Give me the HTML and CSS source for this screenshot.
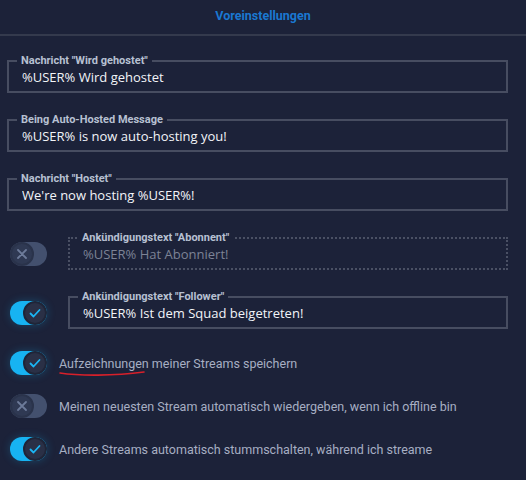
FILE: index.html
```html
<!DOCTYPE html>
<html lang="de">

<head>
    <meta charset="UTF-8">
    <meta name="viewport" content="width=device-width, initial-scale=1.0">
    <title>Voreinstellungen</title>
    <link rel="stylesheet" href="styles.css">
</head>

<body>

    <h1 class="titel">Voreinstellungen</h1>

    <div class="inhalt">

        <fieldset class="feld">
            <legend>Nachricht "Wird gehostet"</legend>
            <input class="wert" type="text" value="%USER% Wird gehostet">
        </fieldset>

        <fieldset class="feld">
            <legend>Being Auto-Hosted Message</legend>
            <input class="wert" type="text" value="%USER% is now auto-hosting you!">
        </fieldset>

        <fieldset class="feld">
            <legend>Nachricht "Hostet"</legend>
            <input class="wert" type="text" value="We're now hosting %USER%!">
        </fieldset>

        <div class="zeile">
            <span class="schalter aus">
                <span class="knopf"><svg width="20" height="20" viewBox="0 0 20 20"><path d="M6 6 L14 14 M14 6 L6 14" /></svg></span>
            </span>
            <fieldset class="feld inaktiv">
                <legend>Ankündigungstext "Abonnent"</legend>
                <input class="wert" type="text" value="%USER% Hat Abonniert!" disabled>
            </fieldset>
        </div>

        <div class="zeile">
            <span class="schalter an">
                <span class="knopf"><svg width="20" height="20" viewBox="0 0 20 20"><path d="M5.5 10.5 L8.5 13.5 L14.5 7" /></svg></span>
            </span>
            <fieldset class="feld">
                <legend>Ankündigungstext "Follower"</legend>
                <input class="wert" type="text" value="%USER% Ist dem Squad beigetreten!">
            </fieldset>
        </div>

        <div class="option">
            <span class="schalter an">
                <span class="knopf"><svg width="20" height="20" viewBox="0 0 20 20"><path d="M5.5 10.5 L8.5 13.5 L14.5 7" /></svg></span>
            </span>
            <span class="text markiert">Aufzeichnungen meiner Streams speichern
                <svg class="strich" width="90" height="8" viewBox="0 0 90 8">
                    <path d="M1 3 C 20 6, 55 6, 85 2" fill="none" stroke="#d8202a" stroke-width="1.6" stroke-linecap="round"/>
                </svg>
            </span>
        </div>

        <div class="option">
            <span class="schalter aus">
                <span class="knopf"><svg width="20" height="20" viewBox="0 0 20 20"><path d="M6 6 L14 14 M14 6 L6 14" /></svg></span>
            </span>
            <span class="text">Meinen neuesten Stream automatisch wiedergeben, wenn ich offline bin</span>
        </div>

        <div class="option">
            <span class="schalter an">
                <span class="knopf"><svg width="20" height="20" viewBox="0 0 20 20"><path d="M5.5 10.5 L8.5 13.5 L14.5 7" /></svg></span>
            </span>
            <span class="text">Andere Streams automatisch stummschalten, während ich streame</span>
        </div>

    </div>

</body>

</html>
```

FILE: styles.css
```css
*{
    margin: 0;
    padding: 0;
    box-sizing: border-box;
}
body{
    background: #1c2239;
    font-family: Roboto, "Liberation Sans", sans-serif;
    width: 526px;
    height: 480px;
    overflow: hidden;
}
.titel{
    height: 36px;
    line-height: 32px;
    text-align: center;
    font-size: 12.5px;
    font-weight: bold;
    color: #1a78d2;
    border-bottom: 2px solid #343a4d;
}
.inhalt{
    display: flex;
    flex-direction: column;
    padding: 18px 18px 0 7px;
    gap: 20px;
}
.feld{
    border: 2px solid #474d61;
    padding: 0 8px 4px 8px;
    flex: 1;
}
.feld legend{
    font-size: 11px;
    line-height: 13px;
    font-weight: bold;
    color: #b7c0d2;
    padding: 0 4px;
}
.wert{
    display: block;
    width: 100%;
    height: 20px;
    border: 0;
    background: transparent;
    padding: 0 5px;
    font-family: "Open Sans", "Noto Sans", sans-serif;
    font-size: 13px;
    color: #f2f4f8;
    outline: 0;
}
.inaktiv{
    border: 2px dotted #4a5064;
}
.inaktiv .wert{
    color: #7c8396;
}
.zeile{
    display: flex;
    align-items: center;
    gap: 21px;
    padding-left: 3px;
}
.zeile .schalter{
    margin-top: 6px;
}
.option{
    display: flex;
    align-items: center;
    gap: 12px;
    padding-left: 3px;
    height: 24px;
}
.inhalt .zeile + .option{
    margin-top: 2px;
}
.option + .option{
    margin-top: -1px;
}
.schalter{
    display: flex;
    width: 37px;
    height: 24px;
    border-radius: 12px;
    flex: none;
}
.schalter.an{
    background: #17b3f2;
    justify-content: flex-end;
    box-shadow: 0 0 8px rgba(23, 179, 242, 0.25);
}
.schalter.aus{
    background: #43506e;
    justify-content: flex-start;
}
.knopf{
    width: 24px;
    height: 24px;
    border-radius: 50%;
    display: flex;
    align-items: center;
    justify-content: center;
}
.knopf svg path{
    fill: none;
    stroke-width: 1.8;
    stroke-linecap: round;
    stroke-linejoin: round;
}
.an .knopf{
    background: #2a3046;
    border: 2px solid #1f2538;
}
.an .knopf svg path{
    stroke: #1bb6f4;
}
.aus .knopf{
    background: #2f3953;
    border: 2px solid #2a334b;
}
.aus .knopf svg path{
    stroke: #6d7b9a;
}
.text{
    font-size: 12.5px;
    color: #a7afc3;
    white-space: nowrap;
}
.markiert{
    position: relative;
}
.strich{
    position: absolute;
    left: 0;
    top: 14px;
}
```
